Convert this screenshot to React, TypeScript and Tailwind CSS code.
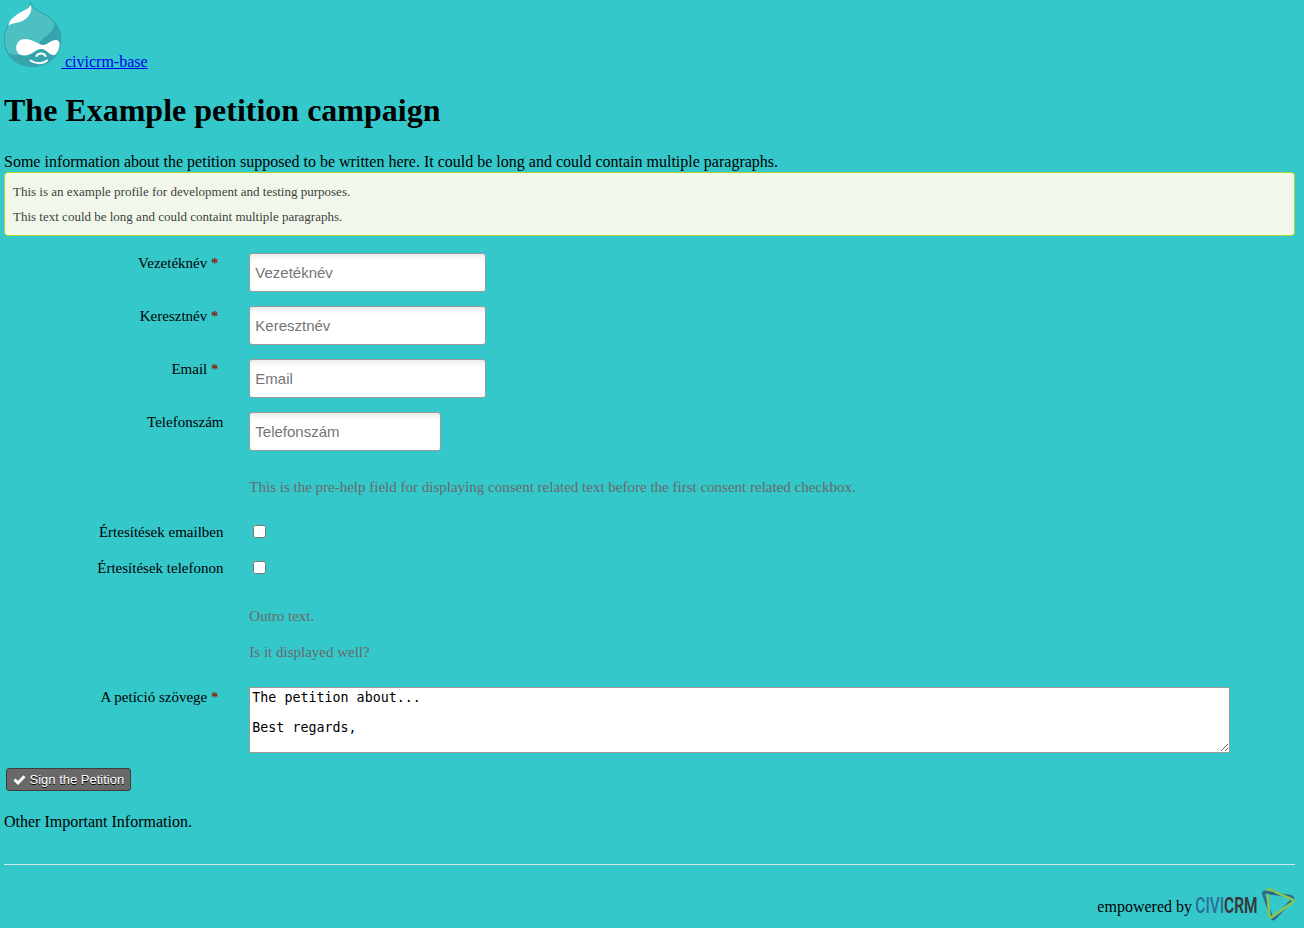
import React from "react";

function Drop() {
  return (
    <svg width="58" height="66" viewBox="0 0 58 66" className="block shrink-0">
      <path d="M26.500 .5C27.500 5 31 7.500 38 11C49 16.500 57 25 57 37.500C57 53 45 64.500 28.500 64.500C12 64.500 .3 53 .3 37.500C.3 27 6 18 14 12.500C21 8.500 26 6.500 26.500 .5Z" fill="#4dc0c4" stroke="#268f98" strokeWidth=".7" />
      <path d="M49 19C54 24 56.700 30 56.700 37.500C56.700 53 45 64.300 28.500 64.300C17 64.300 7 59 2.500 50C8 53 14 53.500 20 52C28 50 34 42 40 36C46 31 52 27 49 19Z" fill="#34a5aa" />
      <path d="M26.500 2.500C29 8 26 14 19.500 18.500C13 22 7 20.500 4.500 24C4.500 17.500 12 13 18 9.500C23 7 26 5.500 26.500 2.500Z" fill="#fff" />
      <path d="M21 37C29 37 35 43 39 43C43 43 47 38 52 38C57 38 56 45 54 49C52 53 50 54 47 52.500C43 50 41 46.500 37 47C32 47 28 53.500 20 53.500C9 53.500 10 37 21 37Z" fill="#fff" />
      <path d="M32.500 54C34 50.500 40 50.500 41.500 54M26.500 58.500C31 62 39 62 43 58.500" fill="none" stroke="#fff" strokeWidth="2" strokeLinecap="round" />
    </svg>
  );
}

function CiviLogo() {
  return (
    <svg width="100" height="35" viewBox="0 0 100 35" className="block shrink-0">
      <text transform="translate(.3 26) scale(.687 1)" fontFamily="Roboto, sans-serif" fontSize="22.500">
        <tspan fill="#2b6c96" fontWeight="500">CIVI</tspan>
        <tspan fill="#383838" fontWeight="600">CRM</tspan>
      </text>
      <g fill="none" strokeLinejoin="round" strokeLinecap="round" strokeWidth="2.800">
        <path d="M70 5L96 9.500Q99 10.500 97 13L80 31Q78 33.500 76.800 30.500L68.500 7Q68 4.800 70 5Z" stroke="#2b6c8e" />
        <path d="M75 2.500L97 12.500Q99.500 14 97 15.800L77 29.800Q74.500 31.500 74.300 28.500L72.500 4Q72.500 1.500 75 2.500Z" stroke="#83c55b" />
        <path d="M70 5L79 6.500" stroke="#2b6c8e" strokeLinecap="butt" />
      </g>
    </svg>
  );
}

type RowProps = { label?: string; required?: boolean; height: string; children: React.ReactNode };

function Row({ label, required, height, children }: RowProps) {
  return (
    <div className={`flex text-[15px] leading-[17px] ${height}`}>
      <div className="w-[219.500px] shrink-0 pt-[2px] text-right text-black">
        {label}
        {required && <span className="pr-[5px] font-bold text-[#8a1f11]"> *</span>}
      </div>
      <div className="ml-[25.800px] min-w-0 flex-1">{children}</div>
    </div>
  );
}

function Field({ name, width }: { name: string; width: string }) {
  return (
    <input
      placeholder={name}
      className={`block h-[39px] rounded-[3px] border border-[#999] bg-white px-[5px] font-['Liberation_Sans',sans-serif] text-[15px] shadow-[inset_0_5px_6px_-3px_#e3e3e3] outline-none placeholder:text-[#757575] ${width}`}
    />
  );
}

export default function App() {
  return (
    <div className="h-[928px] overflow-hidden bg-[#35c8cb] pr-[9px] pl-1 font-['Liberation_Serif',serif] text-base leading-[18px] text-black">
      <a href="#" className="flex h-[71px] items-start pt-[2px] text-[#0000ee]">
        <Drop />
        <span className="mt-[51px] -ml-px whitespace-pre underline"> civicrm-base</span>
      </a>
      <h1 className="mt-[21px] text-[32px] leading-[37px] font-bold">The Example petition campaign</h1>
      <p className="mt-[24px] h-[19px]">Some information about the petition supposed to be written here. It could be long and could contain multiple paragraphs.</p>
      <div className="h-16 rounded-[4px] border border-[#b0d730] bg-[#f1f8eb] px-2 pt-[11px] text-[13px] leading-[15px] text-[#3e3e3e]">
        <p>This is an example profile for development and testing purposes.</p>
        <p className="mt-[10px]">This text could be long and could containt multiple paragraphs.</p>
      </div>
      <form className="mt-[17px]">
        <Row label="Vezetéknév" required height="h-[53px]"><Field name="Vezetéknév" width="w-[236.500px]" /></Row>
        <Row label="Keresztnév" required height="h-[53px]"><Field name="Keresztnév" width="w-[236.500px]" /></Row>
        <Row label="Email" required height="h-[53px]"><Field name="Email" width="w-[236.500px]" /></Row>
        <Row label="Telefonszám" height="h-[67px]"><Field name="Telefonszám" width="w-[192px]" /></Row>
        <Row height="h-[43px]"><p className="text-[#696969]">This is the pre-help field for displaying consent related text before the first consent related checkbox.</p></Row>
        <Row label="Értesítések emailben" height="h-[36px]"><input type="checkbox" className="mt-[3px] ml-1 block h-[13px] w-[13px]" /></Row>
        <Row label="Értesítések telefonon" height="h-[50px]"><input type="checkbox" className="mt-[3px] ml-1 block h-[13px] w-[13px]" /></Row>
        <Row height="h-[79px]">
          <div className="text-[#696969]">
            <p>Outro text.</p>
            <p className="mt-[19px]">Is it displayed well?</p>
          </div>
        </Row>
        <Row label="A petíció szövege" required height="h-[81px]">
          <textarea
            defaultValue={"The petition about...\n\nBest regards,"}
            className="block h-[66px] w-[981px] resize border border-[#999] bg-white p-[2px] font-['DejaVu_Sans_Mono',monospace] text-[13.333px] leading-[15px] text-black outline-none"
          />
        </Row>
        <button type="button" className="ml-[2px] flex h-[23px] w-[125px] items-center rounded-[3px] border border-[#3e3e3e] bg-[#696969] pl-[6px] font-['Liberation_Sans',sans-serif] text-[13px] leading-[15px] whitespace-nowrap text-white [text-shadow:0_1px_0_black]">
          <svg width="13" height="12" viewBox="0 0 13 12" className="mr-[3.500px] shrink-0"><path d="M1.500 5.500L5 9L11.500 2.200" fill="none" stroke="white" strokeWidth="2.900" /></svg>
          Sign the Petition
        </button>
      </form>
      <p className="mt-[22px]">Other Important Information.</p>
      <div className="mt-[33px] flex h-[58px] items-end justify-end border-t border-[#d3e5e5]">
        <span className="mr-[3px] mb-[6px]">empowered by</span>
        <CiviLogo />
      </div>
    </div>
  );
}
